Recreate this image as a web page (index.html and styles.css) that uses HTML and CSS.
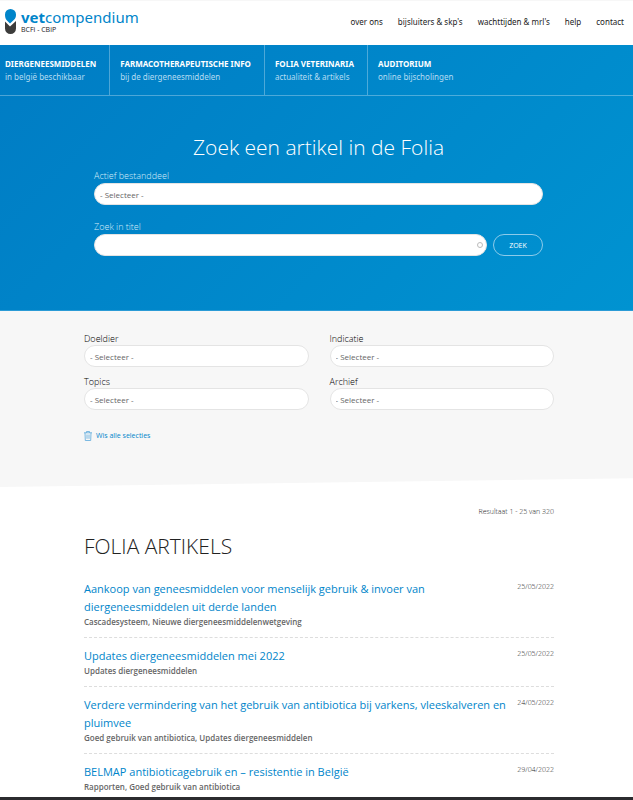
FILE: index.html
```html
<!DOCTYPE html>
<html lang="nl">
  <head>
    <meta charset="utf-8"/>
    <meta name="viewport" content="width=device-width, initial-scale=1">
    <title>Folia artikels - Vetcompendium</title>
    <link rel="stylesheet" href="styles.css">
  </head>
<body>

<header class="header">
  <a href="#" class="logo">
    <svg class="logo_mark" viewBox="0 0 11 25" width="11" height="25" aria-hidden="true">
      <path fill="#0085ca" d="M0 5.500a5.500 5.500 0 0 1 11 0c0 2.500-.5 3.800-2 5.200L5 14.500 1.500 11C.5 9.800 0 8 0 5.500z"/>
      <path fill="#3c3c3b" d="M0 12.500L5 17.500 11 12v7.500a5.500 5.500 0 0 1-11 0z"/>
    </svg>
    <span class="logo_text">
      <span class="logo_name"><b>vet</b>compendium</span>
      <span class="logo_sub">BCFi - CBiP</span>
    </span>
  </a>
  <nav class="topnav">
    <a href="#">over ons</a>
    <a href="#">bijsluiters &amp; skp's</a>
    <a href="#">wachttijden &amp; mrl's</a>
    <a href="#">help</a>
    <a href="#">contact</a>
  </nav>
</header>

<div class="hero">
  <nav class="mainnav">
    <a href="#"><b>DIERGENEESMIDDELEN</b><span>in belgië beschikbaar</span></a>
    <a href="#"><b>FARMACOTHERAPEUTISCHE INFO</b><span>bij de diergeneesmiddelen</span></a>
    <a href="#"><b>FOLIA VETERINARIA</b><span>actualiteit &amp; artikels</span></a>
    <a href="#"><b>AUDITORIUM</b><span>online bijscholingen</span></a>
  </nav>
  <form class="search">
    <h1>Zoek een artikel in de Folia</h1>
    <label for="bestanddeel">Actief bestanddeel</label>
    <select id="bestanddeel" class="field"><option>- Selecteer -</option></select>
    <label for="titel">Zoek in titel</label>
    <div class="search_row">
      <div class="search_box">
        <input type="text" id="titel" class="field">
        <span class="throbber"></span>
      </div>
      <button type="submit" class="button">ZOEK</button>
    </div>
  </form>
</div>

<section class="filters">
  <form class="container filter_grid">
    <div class="filter">
      <label for="doeldier">Doeldier</label>
      <select id="doeldier" class="field"><option>- Selecteer -</option></select>
    </div>
    <div class="filter">
      <label for="indicatie">Indicatie</label>
      <select id="indicatie" class="field"><option>- Selecteer -</option></select>
    </div>
    <div class="filter">
      <label for="topics">Topics</label>
      <select id="topics" class="field"><option>- Selecteer -</option></select>
    </div>
    <div class="filter">
      <label for="archief">Archief</label>
      <select id="archief" class="field"><option>- Selecteer -</option></select>
    </div>
  </form>
  <div class="container">
    <a href="#" class="clear">
      <svg viewBox="0 0 8 10" width="8" height="10" fill="none" stroke="#5ba8dc" stroke-width="0.8" aria-hidden="true">
        <path d="M0 1.800h8M2.500 1.800V.5h3v1.300M1 1.800l.3 7.700h5.400L7 1.800M3 3.500v4.300M5 3.500v4.300"/>
      </svg>
      Wis alle selecties
    </a>
  </div>
</section>

<main class="container results">
  <p class="count">Resultaat 1 - 25 van 320</p>
  <h2>FOLIA ARTIKELS</h2>
  <article class="item">
    <div class="item_text">
      <h3><a href="#">Aankoop van geneesmiddelen voor menselijk gebruik &amp; invoer van diergeneesmiddelen uit derde landen</a></h3>
      <p>Cascadesysteem, Nieuwe diergeneesmiddelenwetgeving</p>
    </div>
    <time datetime="2022-05-25">25/05/2022</time>
  </article>
  <article class="item">
    <div class="item_text">
      <h3><a href="#">Updates diergeneesmiddelen mei 2022</a></h3>
      <p>Updates diergeneesmiddelen</p>
    </div>
    <time datetime="2022-05-25">25/05/2022</time>
  </article>
  <article class="item">
    <div class="item_text">
      <h3><a href="#">Verdere vermindering van het gebruik van antibiotica bij varkens, vleeskalveren en pluimvee</a></h3>
      <p>Goed gebruik van antibiotica, Updates diergeneesmiddelen</p>
    </div>
    <time datetime="2022-05-24">24/05/2022</time>
  </article>
  <article class="item">
    <div class="item_text">
      <h3><a href="#">BELMAP antibioticagebruik en – resistentie in België</a></h3>
      <p>Rapporten, Goed gebruik van antibiotica</p>
    </div>
    <time datetime="2022-04-29">29/04/2022</time>
  </article>
</main>

<footer class="footer"></footer>

</body>
</html>
```

FILE: styles.css
```css
* {
  box-sizing: border-box;
}

body {
  margin: 0;
  font-family: "Open Sans", "Noto Sans", sans-serif;
  color: #222;
  background-color: #fff;
}

a {
  color: inherit;
  text-decoration: none;
}

h1, h2, h3, p {
  margin: 0;
  font-weight: 300;
}

.header {
  display: flex;
  justify-content: space-between;
  align-items: flex-start;
  height: 45px;
  padding: 8px 9px 0 5px;
  border-top: 1px solid #f7f7f7;
}

.logo {
  display: flex;
  gap: 5px;
}

.logo_text {
  display: flex;
  flex-direction: column;
}

.logo_name {
  font-family: "Noto Sans", sans-serif;
  font-size: 15px;
  line-height: 17px;
  color: #0085ca;
}

.logo_sub {
  font-size: 7px;
  line-height: 8px;
}

.topnav {
  display: flex;
  gap: 15px;
  padding-top: 7px;
  font-family: "Noto Sans", sans-serif;
  font-size: 8px;
  line-height: 12px;
}

.hero {
  height: 266px;
  color: #fff;
  background: linear-gradient(135deg, #007cc4, #0093d1);
  border-bottom: 1px solid #2b9bd6;
}

.mainnav {
  display: flex;
  height: 51px;
  border-bottom: 1px solid rgba(255, 255, 255, 0.3);
}

.mainnav a {
  display: flex;
  flex-direction: column;
  padding: 12px 13px 0 10px;
  border-right: 1px solid rgba(255, 255, 255, 0.3);
  font-family: "Noto Sans", sans-serif;
  font-size: 8px;
  line-height: 13px;
  white-space: nowrap;
}

.mainnav a:first-child {
  padding-left: 5px;
}

.mainnav a:last-child {
  border-right: none;
}

.mainnav span {
  color: #b5dcf2;
}

.search {
  display: flex;
  flex-direction: column;
  padding: 36px 90px 0 94px;
}

.search h1 {
  font-size: 21px;
  line-height: 30px;
  text-align: center;
  margin-bottom: 8px;
}

.search label {
  font-size: 9px;
  line-height: 12px;
  font-weight: 300;
  color: #d5ecf8;
  margin-bottom: 1px;
}

.field {
  display: block;
  width: 100%;
  height: 22px;
  padding: 0 5px;
  border: 1px solid #e4e4e4;
  border-radius: 11px;
  background-color: #fff;
  color: #666;
  font-family: "Open Sans", sans-serif;
  font-size: 8px;
  appearance: none;
}

.search select {
  margin-bottom: 16px;
}

.search_row {
  display: flex;
  gap: 6px;
}

.search_box {
  position: relative;
  flex: 1;
}

.throbber {
  position: absolute;
  top: 8px;
  right: 4px;
  width: 6px;
  height: 6px;
  border: 1px solid #bbb;
  border-radius: 50%;
}

.button {
  width: 50px;
  height: 22px;
  border: 1px solid #8ccbea;
  border-radius: 11px;
  background: none;
  color: #fff;
  font-family: "Open Sans", sans-serif;
  font-size: 7px;
  cursor: pointer;
}

.container {
  padding-left: 84px;
  padding-right: 79px;
}

.filters {
  height: 176px;
  padding-top: 21px;
  background-color: #f7f7f7;
  clip-path: polygon(0 0, 100% 0, 100% 95%, 0 100%);
}

.filter_grid {
  display: grid;
  grid-template-columns: 1fr 1fr;
  gap: 8px 21px;
}

.filter label {
  display: block;
  font-size: 9px;
  line-height: 13px;
  font-weight: 300;
  color: #000;
}

.clear {
  display: inline-flex;
  align-items: center;
  gap: 4px;
  margin-top: 20px;
  color: #0085ca;
  font-size: 7px;
  line-height: 12px;
}

.results {
  padding-top: 19px;
}

.count {
  font-size: 7px;
  line-height: 12px;
  font-weight: 300;
  text-align: right;
  color: #222;
}

.results h2 {
  margin: 12px 0 18px;
  font-size: 21px;
  line-height: 32px;
}

.item {
  display: flex;
  justify-content: space-between;
  padding-bottom: 10px;
  margin-bottom: 9px;
  border-bottom: 1px dashed #ddd;
}

.item:last-child {
  border-bottom: none;
  padding-bottom: 0;
  margin-bottom: 5px;
}

.item_text {
  max-width: 424px;
}

.item h3 {
  font-size: 11px;
  line-height: 18px;
  font-weight: 400;
  color: #0085ca;
}

.item p {
  font-size: 8px;
  line-height: 11px;
  font-weight: 600;
  color: #666;
}

.item time {
  font-size: 7px;
  line-height: 14px;
  font-weight: 300;
  color: #222;
}

.footer {
  height: 3px;
  background-color: #2b2b2e;
}
```
